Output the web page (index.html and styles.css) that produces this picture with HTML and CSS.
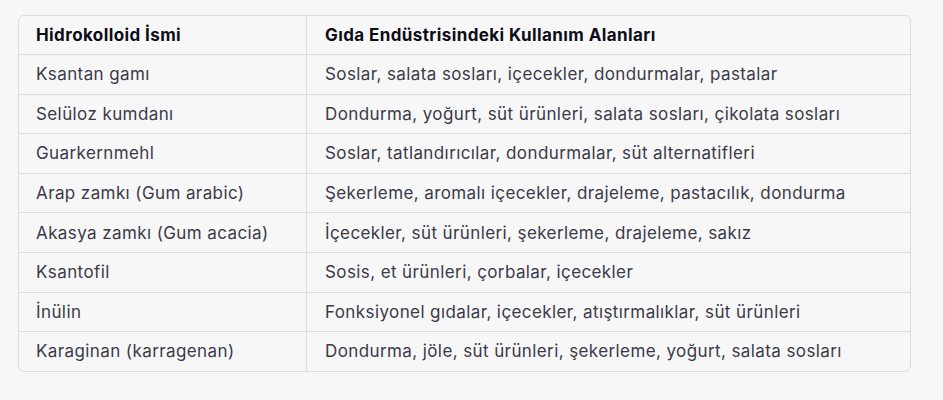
FILE: index.html
```html
<!DOCTYPE html>
<html lang="tr">
<head>
<meta charset="utf-8">
<link rel="stylesheet" href="styles.css">
</head>
<body>
<div class="wrap">
  <table class="tbl">
    <thead>
      <tr><th>Hidrokolloid İsmi</th><th>Gıda Endüstrisindeki Kullanım Alanları</th></tr>
    </thead>
    <tbody>
      <tr><td>Ksantan gamı</td><td>Soslar, salata sosları, içecekler, dondurmalar, pastalar</td></tr>
      <tr><td>Selüloz kumdanı</td><td>Dondurma, yoğurt, süt ürünleri, salata sosları, çikolata sosları</td></tr>
      <tr><td>Guarkernmehl</td><td>Soslar, tatlandırıcılar, dondurmalar, süt alternatifleri</td></tr>
      <tr><td>Arap zamkı (Gum arabic)</td><td>Şekerleme, aromalı içecekler, drajeleme, pastacılık, dondurma</td></tr>
      <tr><td>Akasya zamkı (Gum acacia)</td><td>İçecekler, süt ürünleri, şekerleme, drajeleme, sakız</td></tr>
      <tr><td>Ksantofil</td><td>Sosis, et ürünleri, çorbalar, içecekler</td></tr>
      <tr><td>İnülin</td><td>Fonksiyonel gıdalar, içecekler, atıştırmalıklar, süt ürünleri</td></tr>
      <tr><td>Karaginan (karragenan)</td><td>Dondurma, jöle, süt ürünleri, şekerleme, yoğurt, salata sosları</td></tr>
    </tbody>
  </table>
</div>
</body>
</html>
```
FILE: styles.css
```css
html, body {
  margin: 0;
  background: #f7f7f8;
}
body {
  font-family: Inter, "Liberation Sans", sans-serif;
  color: #3a3a48;
}
.wrap {
  padding: 15px 0 0 18px;
}
.tbl {
  width: 893px;
  border-collapse: separate;
  border-spacing: 0;
  border: 1px solid #dcdce3;
  border-radius: 6px;
  font-size: 17px;
  letter-spacing: 0.4px;
  background: #f7f7f8;
}
.tbl th, .tbl td {
  text-align: left;
  padding: 0 17px;
  height: 38.6px;
  border-bottom: 1px solid #dcdce3;
  white-space: nowrap;
}
.tbl th:first-child, .tbl td:first-child {
  width: 253px;
  border-right: 1px solid #dcdce3;
}
.tbl th:last-child, .tbl td:last-child {
  padding-left: 18px;
}
.tbl tbody tr:last-child td {
  border-bottom: none;
}
.tbl th {
  font-weight: 700;
  color: #0d0d18;
  height: 38px;
}
```
